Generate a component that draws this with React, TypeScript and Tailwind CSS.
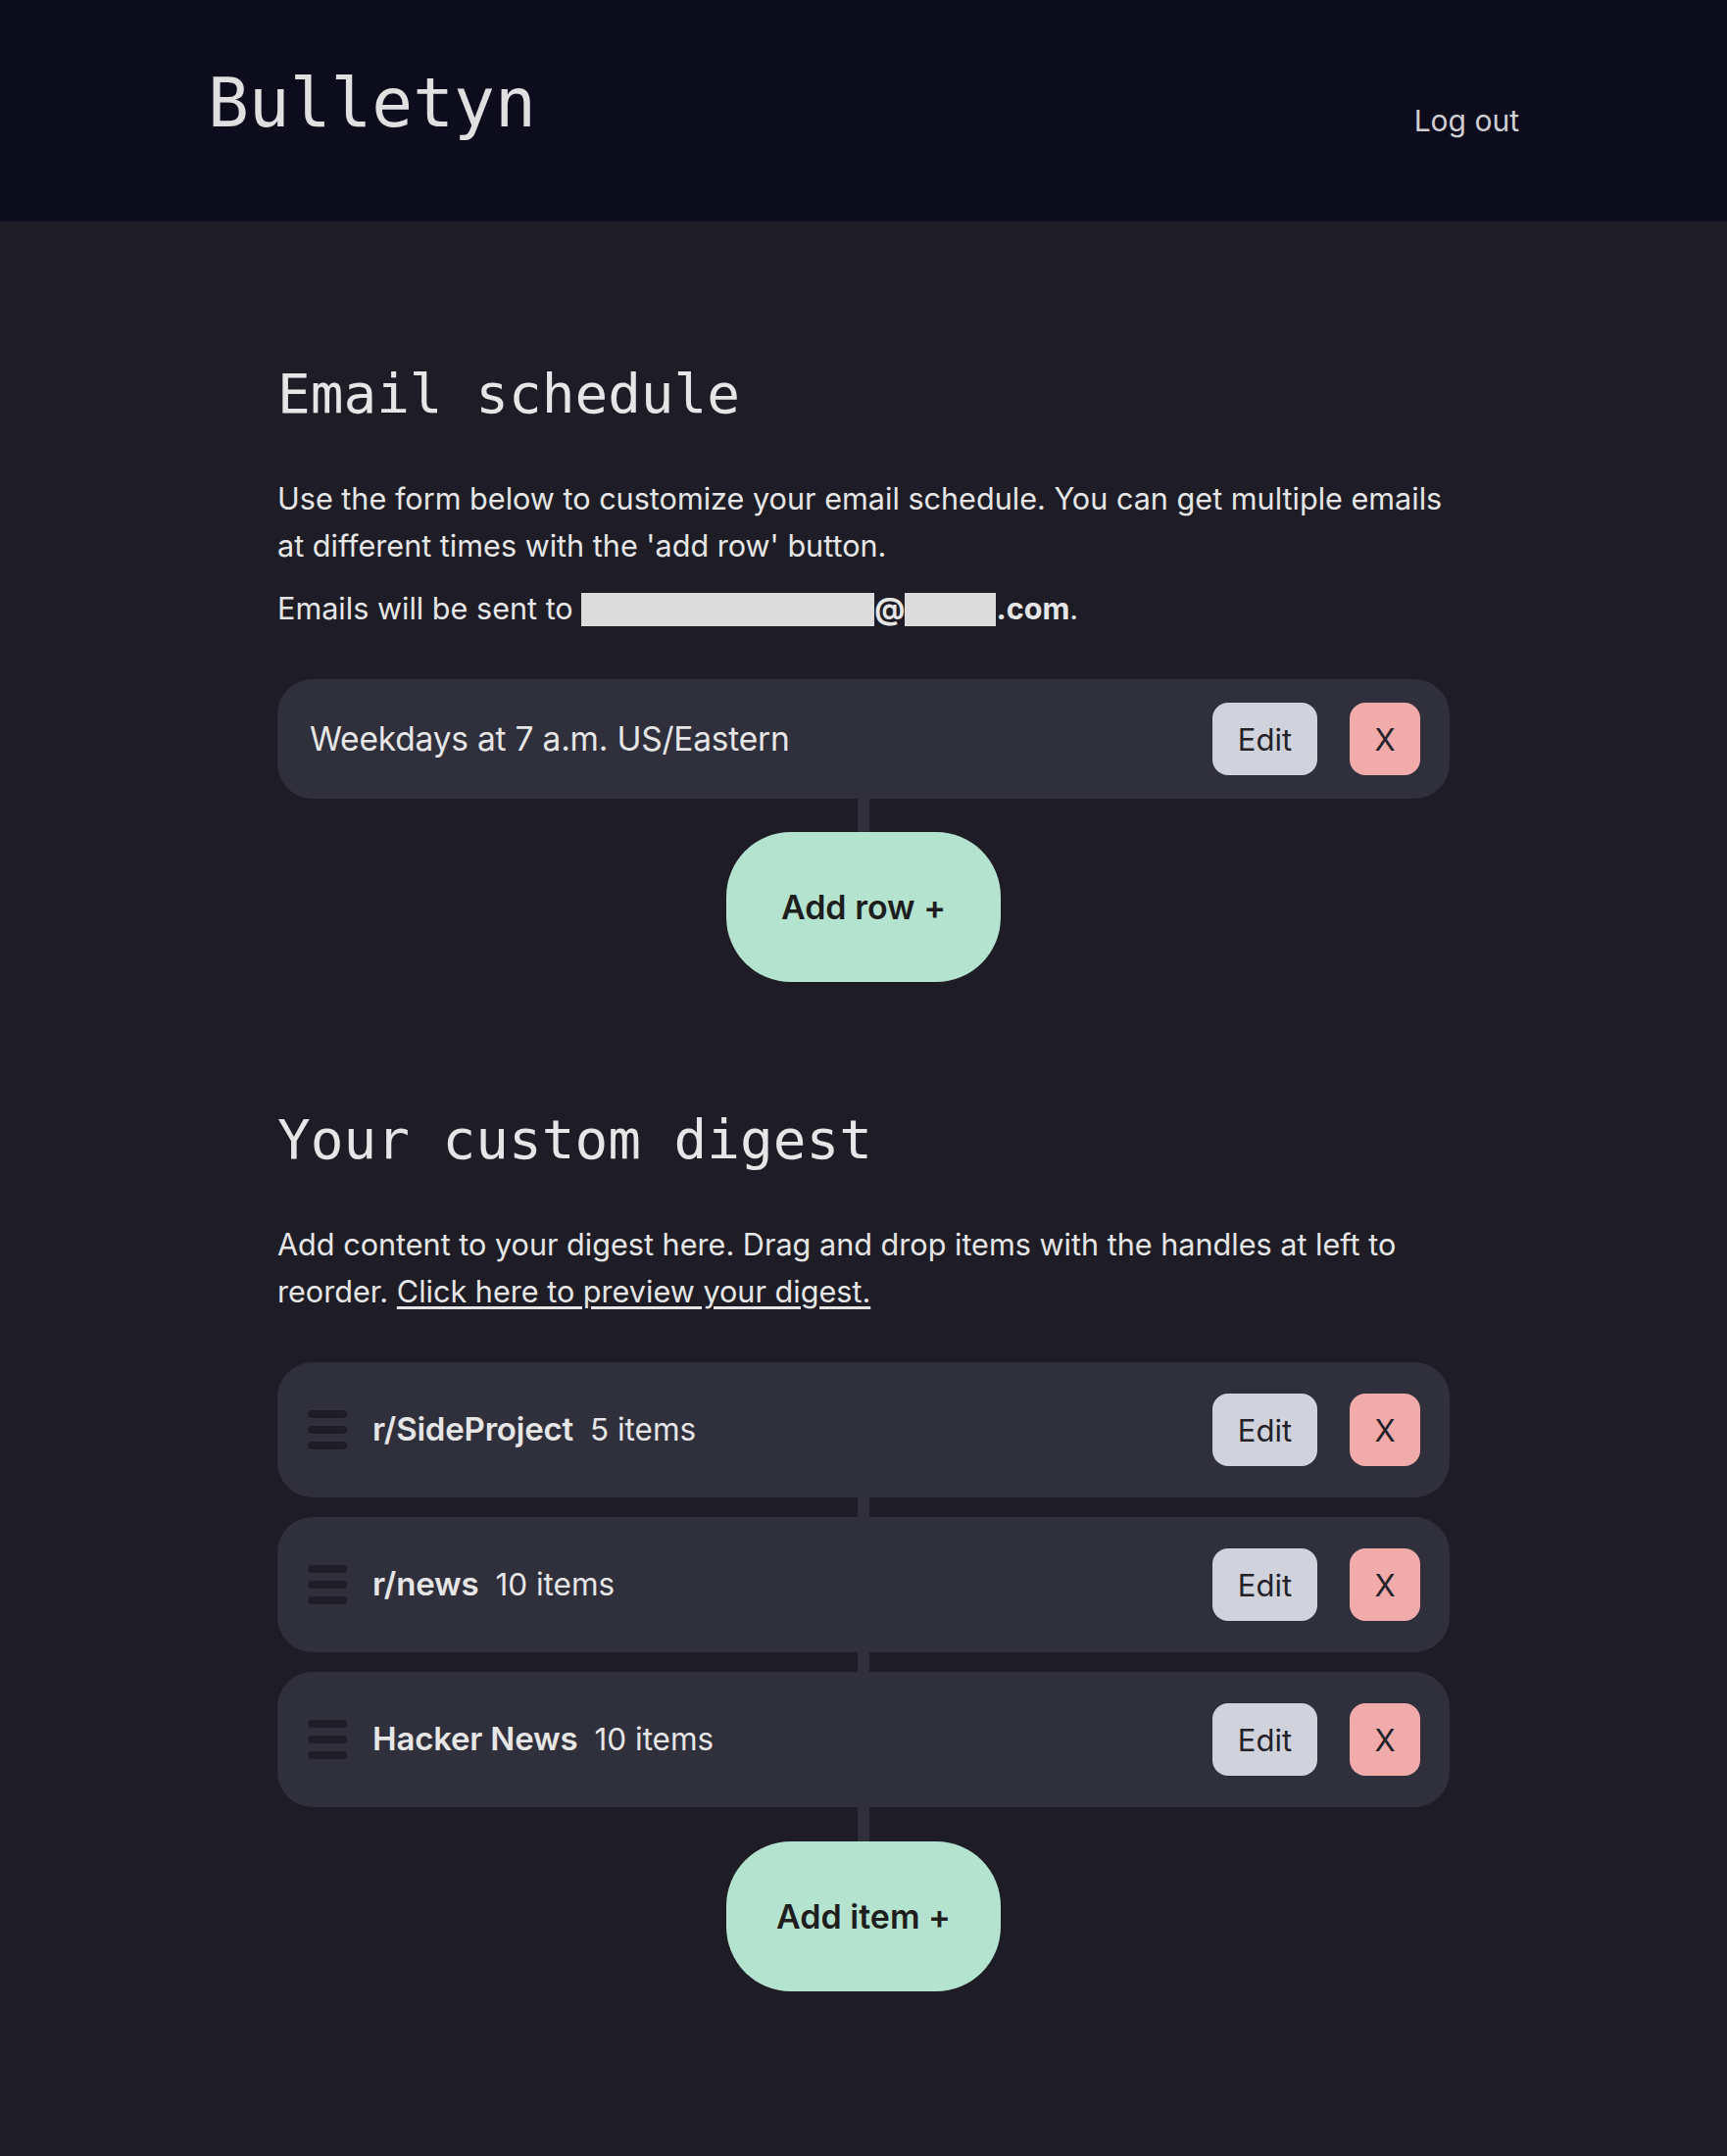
import React from "react";

const mono = { fontFamily: '"DejaVu Sans Mono", "Liberation Mono", monospace' };

function Buttons() {
  return (
    <div className="flex items-center gap-[33px]">
      <button className="h-[74px] w-[107px] rounded-[16px] bg-[#d1d3dc] text-[31px] leading-none text-[#222228]">
        Edit
      </button>
      <button className="h-[74px] w-[72px] rounded-[16px] bg-[#f2abab] text-[31px] leading-none text-[#222228]">
        X
      </button>
    </div>
  );
}

function Connector({ h }: { h: string }) {
  return <div className={`mx-auto w-[12px] bg-[#302f3c] ${h}`} />;
}

function AddButton({ label }: { label: string }) {
  return (
    <button className="mx-auto block h-[153px] w-[280px] rounded-[66px] bg-[#b4e4cf] text-[34px] font-semibold leading-none text-[#1e1e1e]">
      {label}
    </button>
  );
}

function Handle() {
  return (
    <div className="flex w-[40px] flex-col gap-[8px]">
      <div className="h-[8px] rounded-[4px] bg-[#1f1e27]" />
      <div className="h-[8px] rounded-[4px] bg-[#1f1e27]" />
      <div className="h-[8px] rounded-[4px] bg-[#1f1e27]" />
    </div>
  );
}

function Item({ title, count }: { title: string; count: string }) {
  return (
    <div className="flex h-[138px] items-center justify-between rounded-[36px] bg-[#302f3c] pl-[31px] pr-[30px]">
      <div className="flex items-center">
        <Handle />
        <span className="ml-[26px] text-[33px] font-semibold tracking-[-0.2px] text-[#e6e6e6]">{title}</span>
        <span className="ml-[17px] text-[31.5px] text-[#e6e6e6]">{count}</span>
      </div>
      <Buttons />
    </div>
  );
}

export default function App() {
  return (
    <div
      className="min-h-[2200px] bg-[#1e1d26] text-[#e6e6e6]"
      style={{ fontFamily: 'Inter, "Noto Sans", "Liberation Sans", sans-serif' }}
    >
      <header className="h-[226px] bg-[#0d0c1d]">
        <div className="mx-auto flex w-[1338px] items-start justify-between">
          <div className="mt-[70px] text-[69.5px] leading-none text-[#e0e0e0]" style={mono}>
            Bulletyn
          </div>
          <a className="mt-[108px] text-[30px] leading-none text-[#cfcfd4]">Log out</a>
        </div>
      </header>

      <main className="mx-auto w-[1196px]">
        <section className="pt-[148px]">
          <h2 className="text-[56px] leading-none text-[#e6e6e6]" style={mono}>
            Email schedule
          </h2>
          <p className="mt-[55px] text-[30.6px] leading-[48px] text-[#e6e6e6]">
            Use the form below to customize your email schedule. You can get multiple emails at different
            times with the 'add row' button.
          </p>
          <p className="mt-[16px] text-[30.6px] leading-[48px] text-[#e6e6e6]">
            Emails will be sent to{" "}
            <span className="inline-block h-[34px] w-[299px] bg-[#dcdcdc] align-[-7px]" />
            <b className="font-bold">@</b>
            <span className="inline-block h-[34px] w-[93px] bg-[#dcdcdc] align-[-7px]" />
            <b className="font-bold">.com</b>.
          </p>

          <div className="mt-[48px] flex h-[122px] items-center justify-between rounded-[36px] bg-[#302f3c] pl-[33px] pr-[30px]">
            <span className="text-[33.5px] tracking-[-0.2px] text-[#e6e6e6]">Weekdays at 7 a.m. US/Eastern</span>
            <Buttons />
          </div>
          <Connector h="h-[34px]" />
          <AddButton label="Add row +" />
        </section>

        <section className="pt-[133px] pb-[168px]">
          <h2 className="text-[56px] leading-none text-[#e6e6e6]" style={mono}>
            Your custom digest
          </h2>
          <p className="mt-[55px] text-[30.6px] leading-[48px] text-[#e6e6e6]">
            Add content to your digest here. Drag and drop items with the handles at left to reorder.{" "}
            <a className="underline underline-offset-[4px]">Click here to preview your digest.</a>
          </p>

          <div className="mt-[48px] flex flex-col">
            <Item title="r/SideProject" count="5 items" />
            <Connector h="h-[20px]" />
            <Item title="r/news" count="10 items" />
            <Connector h="h-[20px]" />
            <Item title="Hacker News" count="10 items" />
          </div>
          <Connector h="h-[35px]" />
          <AddButton label="Add item +" />
        </section>
      </main>
    </div>
  );
}
